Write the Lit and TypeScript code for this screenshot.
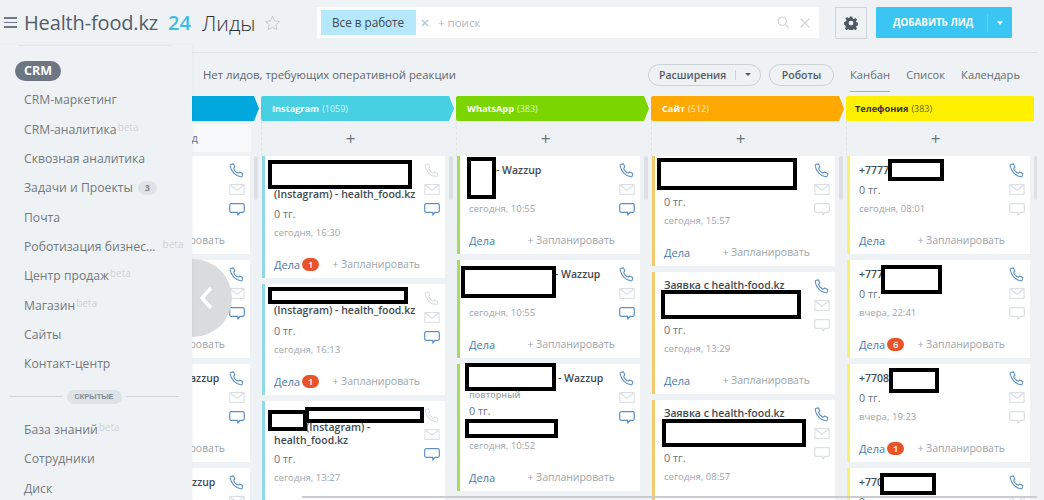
import { LitElement, html, css } from "lit";
import { customElement } from "lit/decorators.js";

type Box = [number, number, number, number];
interface Card {
  t: number; // title block height
  pad: number; // title first-line offset
  lines?: string[];
  indent?: number;
  repeat?: boolean;
  extra?: number;
  date: string;
  badge?: string;
  phone: boolean;
  chat: boolean;
  boxes?: Box[]; // page coords x0,y0,x1,y1
}
interface Col {
  name: string;
  count: string;
  color: string;
  bar: string;
  dark?: boolean;
  last?: boolean;
  x: number;
  cards: Card[];
}

const insta = "(Instagram) - health_food.kz";
const PLUS = "Запланировать";

const columns: Col[] = [
  {
    name: "", count: "", color: "#00a8de", bar: "#6cc8e8", x: 66,
    cards: [
      { t: 16, pad: 2, date: "сегодня, 11:02", phone: true, chat: true },
      { t: 16, pad: 2, date: "сегодня, 11:00", phone: true, chat: true },
      { t: 16, pad: 2, lines: ["- Wazzup"], indent: 95, date: "сегодня, 10:58", phone: true, chat: true },
      { t: 16, pad: 2, lines: ["- Wazzup"], indent: 91, date: "сегодня, 10:55", phone: true, chat: true },
    ],
  },
  {
    name: "Instagram", count: "(1059)", color: "#47d0e2", bar: "#8fd9e6", x: 261,
    cards: [
      { t: 40, pad: 26, lines: [insta], date: "сегодня, 16:30", badge: "1", phone: false, chat: true, boxes: [[268, 160, 412, 189]] },
      { t: 29, pad: 14, lines: [insta], date: "сегодня, 16:13", badge: "1", phone: false, chat: true, boxes: [[268, 287, 408, 304]] },
      { t: 40, pad: 14, lines: ["(Instagram) -", "health_food.kz"], indent: 32, date: "сегодня, 13:27", phone: false, chat: true, boxes: [[268, 410, 307, 431], [305, 407, 424, 423]] },
    ],
  },
  {
    name: "WhatsApp", count: "(383)", color: "#7bd500", bar: "#a6dc62", x: 456,
    cards: [
      { t: 16, pad: 2, lines: ["- Wazzup"], indent: 27, date: "сегодня, 10:55", phone: true, chat: true, boxes: [[467, 157, 496, 199]] },
      { t: 16, pad: 2, lines: ["- Wazzup"], indent: 86, date: "сегодня, 10:55", phone: true, chat: true, boxes: [[461, 266, 556, 298]] },
      { t: 29, pad: 2, lines: ["- Wazzup"], indent: 89, repeat: true, extra: 16, date: "сегодня, 10:52", phone: true, chat: true, boxes: [[465, 363, 556, 391], [465, 419, 558, 438]] },
    ],
  },
  {
    name: "Сайт", count: "(512)", color: "#ffa900", bar: "#f5ca6e", x: 651,
    cards: [
      { t: 28, pad: 2, date: "сегодня, 15:57", phone: true, chat: false, boxes: [[657, 158, 797, 190]] },
      { t: 40, pad: 1, lines: ["Заявка с health-food.kz"], date: "сегодня, 13:29", phone: true, chat: false, boxes: [[661, 290, 801, 319]] },
      { t: 40, pad: 1, lines: ["Заявка с health-food.kz"], date: "сегодня, 08:57", phone: true, chat: false, boxes: [[662, 419, 806, 447]] },
    ],
  },
  {
    name: "Телефония", count: "(383)", color: "#fff000", bar: "#f9ef74", dark: true, last: true, x: 846,
    cards: [
      { t: 16, pad: 2, lines: ["+7777"], date: "сегодня, 08:01", phone: true, chat: false, boxes: [[888, 159, 944, 181]] },
      { t: 16, pad: 2, lines: ["+777"], date: "вчера, 22:41", badge: "6", phone: true, chat: false, boxes: [[881, 265, 942, 294]] },
      { t: 16, pad: 2, lines: ["+7708"], date: "вчера, 19:23", badge: "1", phone: true, chat: false, boxes: [[889, 368, 939, 393]] },
      { t: 16, pad: 2, lines: ["+770"], date: "вчера, 17:05", phone: true, chat: false, boxes: [[880, 473, 936, 495]] },
    ],
  },
];

const menu: { label: string; beta?: boolean; betaGap?: boolean; count?: string }[] = [
  { label: "CRM-маркетинг" },
  { label: "CRM-аналитика", beta: true },
  { label: "Сквозная аналитика" },
  { label: "Задачи и Проекты", count: "3" },
  { label: "Почта" },
  { label: "Роботизация бизнес...", beta: true, betaGap: true },
  { label: "Центр продаж", beta: true },
  { label: "Магазин", beta: true },
  { label: "Сайты" },
  { label: "Контакт-центр" },
];
const menu2 = [
  { label: "База знаний", beta: true },
  { label: "Сотрудники" },
  { label: "Диск" },
];

const phoneIcon = (cls: string) => html`<svg class="ic ${cls}" width="16" height="15" viewBox="0 0 16 15" fill="none" stroke-width="1.1" stroke-linejoin="round"><path d="M2.2 1.2 4.4.9 6 3.9 4.7 5.2c.4 1.9 2.6 4.3 4.6 5l1.4-1.3 3 1.7-.4 2.3c-.2.7-.9 1-1.6.9C6.6 13 1.9 8.2 1.2 2.8c-.1-.7.3-1.4 1-1.6Z"/></svg>`;
const mailIcon = html`<svg class="ic off" width="16" height="11" viewBox="0 0 16 11" fill="none" stroke-width="1.1"><rect x=".9" y=".6" width="14.2" height="9.8"/><path d="M1 .8 8 6.2 15 .8"/></svg>`;
const chatIcon = (cls: string) => html`<svg class="ic ${cls}" width="16" height="13" viewBox="0 0 16 13" fill="none" stroke-width="1.2" stroke-linejoin="round"><path d="M2.2.7h11.6c.8 0 1.5.7 1.5 1.5v5.6c0 .8-.7 1.5-1.5 1.5H11L8.8 12V9.3H2.2C1.4 9.3.7 8.6.7 7.8V2.2C.7 1.4 1.4.7 2.2.7Z"/></svg>`;

@customElement("app-root")
export class AppRoot extends LitElement {
  static styles = css`
    :host { display: block; height: 500px; width: 1044px; overflow: hidden; position: relative;
      background: #eef2f4; font-family: "Open Sans", sans-serif; color: #535c69; }
    * { box-sizing: border-box; }
    .top { height: 45px; display: flex; align-items: center; }
    .burger { width: 13px; flex: none; margin: 0 7px 0 4px; display: flex; flex-direction: column; gap: 3px; }
    .burger i { display: block; height: 1.5px; background: #6f7985; }
    .title { width: 137px; flex: none; font-size: 20px; font-weight: 500; color: #535c69; white-space: nowrap; letter-spacing: -.15px; }
    .num { font-size: 20px; font-weight: 600; color: #3fbde8; margin-left: 7px; width: 34px; flex: none; }
    .page { width: 53px; flex: none; font-size: 21px; font-weight: 300; color: #333; white-space: nowrap; }
    .star { margin: 0 36px 0 9px; display: block; flex: none; }
    .search { width: 502px; flex: none; height: 31px; background: #fff; display: flex; align-items: center; padding-left: 4px; position: relative; }
    .chip { width: 95px; height: 25px; background: #b5e8fa; font-size: 11.7px; color: #3f4750; padding-left: 11px; line-height: 25px; white-space: nowrap; }
    .chipx { margin-left: 5px; margin-right: 9px; display: block; }
    .find { font-size: 11.5px; color: #b3b9bf; }
    .sright { margin-left: auto; display: flex; align-items: center; gap: 10px; padding-right: 9px; }
    .gear { width: 32px; height: 32px; flex: none; margin-left: 16px; border: 1px solid #cfd4d8; display: flex; align-items: center; justify-content: center; }
    .add { width: 136px; flex: none; height: 31px; margin-left: 9px; background: #3bc5f2; border-radius: 1px; display: flex; align-items: center; color: #fff;
      font-size: 9.8px; font-weight: 700; padding-left: 17px; white-space: nowrap; }
    .add .sep { width: 1px; height: 18px; background: #63d1f5; margin-left: auto; }
    .add .car { width: 0; height: 0; border: 3.5px solid transparent; border-top: 4px solid #fff; border-bottom: 0; margin: 0 9px 0 9px; }

    .body { display: flex; height: 455px; }
    .side { width: 192px; flex: none; position: relative; z-index: 3; background: #eff2f5; box-shadow: 1px 0 3px rgba(0,0,0,.03); padding-top: 11px; }
    .side::before { content: ""; display: block; height: 1px; background: #e3e7ea; margin: -11px 20px 10px 18px; }
    .row { height: 29.33px; display: flex; align-items: center; padding-left: 24px; font-size: 12.2px; color: #72797f; white-space: nowrap; }
    .pill { height: 20px; margin-left: -9px; padding: 0 9px; border-radius: 10px; background: #6d7682; color: #fff; font-weight: 700; font-size: 12.5px; line-height: 20px; }
    .beta { font-size: 10px; color: #ced3d8; align-self: flex-start; margin-top: 6px; line-height: 12px; margin-left: 1px; }
    .beta.gap { margin-left: 7px; }
    .cnt { margin-left: 5px; width: 19px; height: 14px; border-radius: 7px; background: #dfe3e7; font-size: 9px; font-weight: 700; color: #7d8690; text-align: center; line-height: 14px; }
    .divider { height: 36.3px; display: flex; align-items: center; padding: 0 13px 0 9px; gap: 4px; }
    .divider::before, .divider::after { content: ""; flex: 1; height: 1px; background: #d2d7db; }
    .divider span { height: 14px; width: 55px; border-radius: 7px; background: #dee3e8; color: #828b95; font: 700 7.5px/14px "Liberation Sans", sans-serif; text-align: center; }

    .main { width: 845px; flex: none; display: flex; flex-direction: column; min-width: 0; }
    .rule { height: 8px; flex: none; border-bottom: 1px solid #e0e4e7; }
    .tools { height: 43px; flex: none; display: flex; align-items: center; padding-left: 11px; }
    .none { font-size: 11.35px; color: #5f666d; white-space: nowrap; }
    .btn { height: 22px; border: 1px solid #ccd1d6; border-radius: 11px; font-size: 10.5px; font-weight: 600; color: #535c69; display: flex; align-items: center; white-space: nowrap; flex: none; }
    .b1 { width: 113px; margin-left: auto; padding-left: 10px; }
    .b1 .bar { width: 1px; height: 10px; background: #ccd1d6; margin-left: 9px; }
    .b1 .car { border: 3px solid transparent; border-top: 3.5px solid #535c69; border-bottom: 0; margin-left: 9px; }
    .b2 { width: 65px; margin-left: 8px; justify-content: center; }
    .tabs { display: flex; gap: 16px; margin: 0 17px 0 16px; font-size: 11.2px; color: #666d74; }
    .tab { line-height: 22px; position: relative; white-space: nowrap; }
    .tab.on::after { content: ""; position: absolute; left: 0; right: 0; bottom: -6px; height: 1px; background: #aab0b6; }

    .board { flex: 1; min-height: 0; display: flex; overflow: hidden; position: relative; }
    .slot { flex: none; display: flex; justify-content: flex-end; overflow: hidden; }
    .slot.first { width: 69px; }
    .slot.rest { width: 195px; }
    .slot.end { width: 191px; justify-content: flex-start; }
    .col { width: 195px; flex: none; }
    .hdr { height: 25px; width: 193px; display: flex; align-items: center; padding-left: 11px; font-size: 9.2px; font-weight: 700; color: #fff; white-space: nowrap;
      clip-path: polygon(0 0, calc(100% - 5px) 0, 100% 50%, calc(100% - 5px) 100%, 0 100%); border-radius: 2px 0 0 2px; }
    .hdr.flat { width: 188px; clip-path: none; border-radius: 2px; padding-left: 9px; }
    .hdr.dark { color: #333; }
    .hdr small { font-size: 9px; font-weight: 400; margin-left: 3px; opacity: .75; }
    .plus { height: 35px; display: flex; align-items: center; justify-content: center; width: 178px; border-left: 1px dashed #dfe3e6; font-size: 17px; font-weight: 400; color: #6a737b; }
    .quick { height: 35px; padding: 3px 0 4px 1px; }
    .quick div { height: 28px; width: 184px; background: #f7f9fa; font-size: 11.2px; color: #6a737b; line-height: 28px; text-align: right; padding-right: 53px; white-space: nowrap; }
    .lane { display: flex; gap: 4px; padding-left: 1px; align-items: flex-start; }
    .list { width: 183px; flex: none; display: flex; flex-direction: column; gap: 6px; }
    .sb { width: 4px; height: 44px; background: #dde1e5; border-radius: 2px; flex: none; }
    .card { position: relative; background: #fff; border-left: 3px solid; display: flex; flex: none; }
    .cm { flex: 1; min-width: 0; padding: 6px 0 4px 9px; }
    .ct { font-size: 10.5px; font-weight: 600; line-height: 13px; color: #424a52; white-space: nowrap; }
    .rep { font-size: 9px; color: #a2a7ab; line-height: 13px; margin-top: 3px; }
    .sum { height: 20px; margin-top: 2px; font-size: 10.8px; line-height: 20px; color: #6b7178; }
    .date { height: 18px; font-size: 9.6px; line-height: 18px; color: #a0a5aa; white-space: nowrap; }
    .foot { height: 20px; margin-top: 12px; display: flex; align-items: center; font-size: 11px; white-space: nowrap; }
    .deals { color: #4a78ab; }
    .red { width: 17px; height: 13px; border-radius: 7px; background: #e8532a; color: #fff; font-size: 9.5px; font-weight: 600; line-height: 13px; text-align: center; margin-left: 2px; }
    .plan { margin-left: auto; color: #a0a5aa; margin-right: -1px; font-size: 10.45px; }
    .ci { width: 26px; flex: none; display: flex; flex-direction: column; align-items: center; padding: 7px 0 0 0; }
    .ic { display: block; flex: none; }
    .ci .ic:nth-child(2) { margin-top: 6px; }
    .ci .ic:nth-child(3) { margin-top: 8px; }
    .ic.on { stroke: #5d90c2; }
    .ic.off { stroke: #dcdfe2; }
    .mask { position: absolute; background: #fff; border: 4px solid #000; z-index: 1; }
    .hbar { position: absolute; left: 110px; right: 0; bottom: 2px; height: 2px; background: #c9cdd1; z-index: 2; }
    .circle { position: absolute; left: 154px; top: 259px; width: 78px; height: 78px; border-radius: 50%; background: #d9dbdd; z-index: 2; display: flex; align-items: center; justify-content: flex-end; padding-right: 19px; }
  `;

  private card(c: Card, col: Col, y: number) {
    return html`<div class="card" style="border-left-color:${col.bar};height:${this.h(c)}px">
      <div class="cm">
        <div class="ct" style="height:${c.t}px;padding-top:${c.pad}px">
          ${(c.lines ?? []).map((l, i) => html`<div style="padding-left:${i === 0 ? c.indent ?? 0 : 0}px">${l}</div>`)}
          ${c.repeat ? html`<div class="rep">повторный</div>` : ""}
        </div>
        <div class="sum">0 тг.</div>
        ${c.extra ? html`<div style="height:${c.extra}px"></div>` : ""}
        <div class="date">${c.date}</div>
        <div class="foot">
          <span class="deals">Дела</span>
          ${c.badge ? html`<span class="red">${c.badge}</span>` : ""}
          <span class="plan">+ ${PLUS}</span>
        </div>
      </div>
      <div class="ci">
        ${phoneIcon(c.phone ? "on" : "off")}
        ${mailIcon}
        ${chatIcon(c.chat ? "on" : "off")}
      </div>
      ${(c.boxes ?? []).map(
        (b) => html`<div class="mask" style="left:${b[0] - col.x - 4}px;top:${b[1] - y}px;width:${b[2] - b[0]}px;height:${b[3] - b[1]}px"></div>`
      )}
    </div>`;
  }

  private h(c: Card) {
    return 6 + c.t + 2 + 20 + (c.extra ?? 0) + 18 + 12 + 20 + 4;
  }

  private column(col: Col, first: boolean) {
    let y = 156;
    return html`<div class="col">
      ${col.name
        ? html`<div class="hdr ${col.last ? "flat" : ""} ${col.dark ? "dark" : ""}" style="background:${col.color}">${col.name}<small>${col.count}</small></div>`
        : html`<div class="hdr" style="background:${col.color}"></div>`}
      ${first ? html`<div class="quick"><div>Быстрый лид</div></div>` : html`<div class="plus">+</div>`}
      <div class="lane">
        <div class="list">
          ${col.cards.map((c) => {
            const t = this.card(c, col, y);
            y += this.h(c) + 6;
            return t;
          })}
        </div>
        <div class="sb"></div>
      </div>
    </div>`;
  }

  private item(m: { label: string; beta?: boolean; betaGap?: boolean; count?: string }) {
    return html`<div class="row">${m.label}${m.beta ? html`<span class="beta ${m.betaGap ? "gap" : ""}">beta</span>` : ""}${m.count ? html`<span class="cnt">${m.count}</span>` : ""}</div>`;
  }

  render() {
    return html`
      <div class="top">
        <div class="burger"><i></i><i></i><i></i></div>
        <div class="title">Health-food.kz</div>
        <div class="num">24</div>
        <div class="page">Лиды</div>
        <svg class="star" width="17" height="16" viewBox="0 0 17 16" fill="none" stroke="#c6ccd1" stroke-width="1"><path d="M8.5 1.3 10.6 6l5 .5-3.8 3.3 1.1 5-4.4-2.6-4.4 2.6 1.1-5L1.4 6.500l5-.5Z"/></svg>
        <div class="search">
          <div class="chip">Все в работе</div>
          <svg class="chipx" width="8" height="8" viewBox="0 0 8 8" stroke="#b4cbd6" stroke-width="1.5"><path d="M1 1l6 6M7 1 1 7"/></svg>
          <div class="find">+ поиск</div>
          <div class="sright">
            <svg width="13" height="13" viewBox="0 0 13 13" fill="none" stroke="#d0d4d8" stroke-width="1.2"><circle cx="5.2" cy="5.2" r="4.2"/><path d="M8.3 8.3 12.4 12.4"/></svg>
            <svg width="10" height="10" viewBox="0 0 10 10" stroke="#d0d4d8" stroke-width="1.2"><path d="M.5.5l9 9M9.5.5l-9 9"/></svg>
          </div>
        </div>
        <div class="gear">
          <svg width="14" height="14" viewBox="0 0 14 14"><path fill="#4f5964" fill-rule="evenodd" d="M5.8.5h2.4l.4 1.9 1.3.6 1.6-1 1.6 1.6-1 1.6.5 1.3 1.9.4v2.4l-1.9.4-.5 1.3 1 1.6-1.6 1.6-1.6-1-1.3.5-.4 1.8H5.8l-.4-1.8-1.3-.5-1.6 1-1.6-1.6 1-1.6-.5-1.3L0 8.3V5.9l1.9-.4.5-1.3-1-1.6L3 1l1.6 1 1.3-.6ZM7 4.7a2.4 2.4 0 1 0 0 4.8 2.4 2.4 0 0 0 0-4.8Z"/></svg>
        </div>
        <div class="add">ДОБАВИТЬ ЛИД<span class="sep"></span><span class="car"></span></div>
      </div>
      <div class="body">
        <div class="side">
          <div class="row"><span class="pill">CRM</span></div>
          ${menu.map((m) => this.item(m))}
          <div class="divider"><span>СКРЫТЫЕ</span></div>
          ${menu2.map((m) => this.item(m))}
        </div>
        <div class="main">
          <div class="rule"></div>
          <div class="tools">
            <div class="none">Нет лидов, требующих оперативной реакции</div>
            <div class="btn b1">Расширения<span class="bar"></span><span class="car"></span></div>
            <div class="btn b2">Роботы</div>
            <div class="tabs">
              <span class="tab on">Канбан</span><span class="tab">Список</span><span class="tab">Календарь</span>
            </div>
          </div>
          <div class="board">
            ${columns.map(
              (c, i) => html`<div class="slot ${i === 0 ? "first" : c.last ? "end" : "rest"}">${this.column(c, i === 0)}</div>`
            )}
            <div class="hbar"></div>
          </div>
        </div>
      </div>
      <div class="circle">
        <svg width="14" height="24" viewBox="0 0 14 24" fill="none" stroke="#fff" stroke-width="3.5"><path d="M12 2 3 12l9 10"/></svg>
      </div>
    `;
  }
}
